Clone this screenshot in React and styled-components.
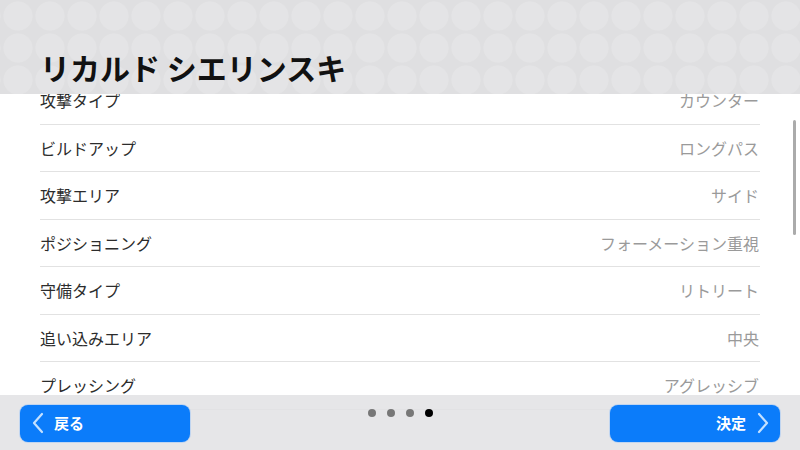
import React from 'react'
import styled, { createGlobalStyle } from 'styled-components'

const rows = [
  ['攻撃タイプ', 'カウンター'],
  ['ビルドアップ', 'ロングパス'],
  ['攻撃エリア', 'サイド'],
  ['ポジショニング', 'フォーメーション重視'],
  ['守備タイプ', 'リトリート'],
  ['追い込みエリア', '中央'],
  ['プレッシング', 'アグレッシブ'],
  ['ディフェンス戦術', 'バランス'],
]

const Chevron = ({ dir }) => (
  <svg width="14" height="22" viewBox="0 0 14 22">
    <path
      d={dir === 'left' ? 'M11 2 L3 11 L11 20' : 'M3 2 L11 11 L3 20'}
      fill="none"
      stroke="#c4e1ff"
      strokeWidth="2.2"
      strokeLinecap="round"
      strokeLinejoin="round"
    />
  </svg>
)

const App = () => {
  return (
    <>
      <GlobalStyle />
      <Screen>
        <Header>
          <Titulo>リカルド シエリンスキ</Titulo>
        </Header>
        <Body>
          <List>
            {rows.map(([label, value]) => (
              <Row key={label}>
                <Label>{label}</Label>
                <Value>{value}</Value>
              </Row>
            ))}
          </List>
        </Body>
        <ScrollBar />
        <Footer>
          <Boton>
            <Chevron dir="left" />
            <span>戻る</span>
          </Boton>
          <Dots>
            <Dot />
            <Dot />
            <Dot />
            <Dot $active />
          </Dots>
          <Boton $right>
            <span>決定</span>
            <Chevron dir="right" />
          </Boton>
        </Footer>
      </Screen>
    </>
  )
}

const GlobalStyle = createGlobalStyle`
  body {
    margin: 0;
    background: #ffffff;
    font-family: "Noto Sans CJK JP", "Noto Sans", sans-serif;
  }
`

const Screen = styled.div`
  position: relative;
  width: 800px;
  height: 450px;
  overflow: hidden;
  display: flex;
  flex-direction: column;
  background: #ffffff;
`

const Header = styled.header`
  height: 94px;
  flex-shrink: 0;
  display: flex;
  align-items: flex-end;
  padding: 0 40px 12px;
  box-sizing: border-box;
  background-color: #dfdfe1;
  background-image: radial-gradient(circle, #e4e4e6 0 14px, transparent 15px);
  background-size: 32px 32px;
  background-position: 2px 0;
  position: relative;
  z-index: 1;
`

const Titulo = styled.h1`
  margin: 0;
  font-size: 30px;
  font-weight: 700;
  color: #111;
  line-height: 1;
`

const Body = styled.main`
  flex: 1;
  overflow: hidden;
  padding: 0 40px;
`

const List = styled.ul`
  list-style: none;
  margin: -17px 0 0;
  padding: 0;
`

const Row = styled.li`
  height: 47.5px;
  box-sizing: border-box;
  display: flex;
  align-items: center;
  justify-content: space-between;
  border-bottom: 1.5px solid #e2e2e2;
  font-size: 16px;
`

const Label = styled.span`
  color: #2c2c2c;
`

const Value = styled.span`
  color: #9a9a9a;
  padding-right: 1px;
`

const ScrollBar = styled.div`
  position: absolute;
  right: 4px;
  top: 120px;
  width: 3px;
  height: 115px;
  border-radius: 2px;
  background: #ababab;
`

const Footer = styled.footer`
  position: absolute;
  left: 0;
  right: 0;
  bottom: 0;
  height: 55px;
  box-sizing: border-box;
  padding: 10px 20px 0;
  display: grid;
  grid-template-columns: 170px 1fr 170px;
  align-items: start;
  background: rgba(226, 226, 228, 0.86);
  z-index: 2;
`

const Boton = styled.button`
  height: 37px;
  border: none;
  border-radius: 8px;
  background: #0b7cfa;
  color: #ffffff;
  font-family: inherit;
  font-size: 15px;
  font-weight: 700;
  display: flex;
  align-items: center;
  gap: ${p => (p.$right ? '10px' : '9px')};
  justify-content: ${p => (p.$right ? 'flex-end' : 'flex-start')};
  padding: ${p => (p.$right ? '0 10px 2px 0' : '0 0 2px 11px')};
  box-shadow: 0 0 0 1px rgba(120, 180, 255, 0.35);
`

const Dots = styled.div`
  display: flex;
  justify-content: center;
  gap: 11px;
  padding-top: 4px;
`

const Dot = styled.span`
  width: 8px;
  height: 8px;
  border-radius: 50%;
  background: ${p => (p.$active ? '#000' : '#777')};
`

export default App
